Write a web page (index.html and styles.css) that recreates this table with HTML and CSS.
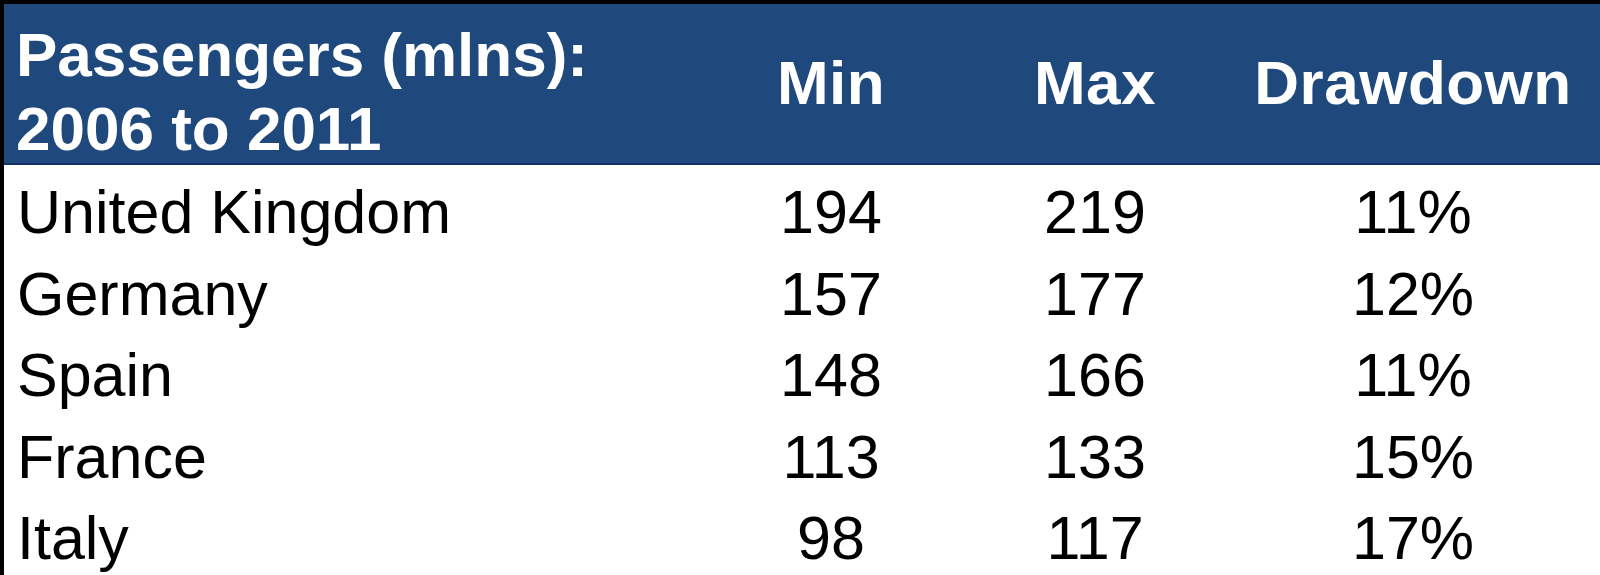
FILE: index.html
```html
<!DOCTYPE html>
<html>
<head>
<meta charset="utf-8">
<link rel="stylesheet" href="styles.css">
<title>Passengers</title>
</head>
<body>
<div class="frame">
  <div class="row head">
    <div class="cell name">Passengers (mlns):<br>2006 to 2011</div>
    <div class="cell num label">Min</div>
    <div class="cell num label">Max</div>
    <div class="cell num label">Drawdown</div>
  </div>
  <div class="body">
    <div class="row"><div class="cell name">United Kingdom</div><div class="cell num">194</div><div class="cell num">219</div><div class="cell num">11%</div></div>
    <div class="row"><div class="cell name">Germany</div><div class="cell num">157</div><div class="cell num">177</div><div class="cell num">12%</div></div>
    <div class="row"><div class="cell name">Spain</div><div class="cell num">148</div><div class="cell num">166</div><div class="cell num">11%</div></div>
    <div class="row"><div class="cell name">France</div><div class="cell num">113</div><div class="cell num">133</div><div class="cell num">15%</div></div>
    <div class="row"><div class="cell name">Italy</div><div class="cell num">98</div><div class="cell num">117</div><div class="cell num">17%</div></div>
  </div>
</div>
</body>
</html>
```

FILE: styles.css
```css
html, body {
  margin: 0;
  padding: 0;
  background: #ffffff;
  overflow: hidden;
}
body {
  width: 1600px;
  height: 575px;
  font-family: "Liberation Sans", Arial, sans-serif;
}
.frame {
  height: 575px;
  box-sizing: border-box;
  border-top: 4px solid #000000;
  border-left: 4px solid #000000;
  overflow: hidden;
}
.row {
  display: grid;
  grid-template-columns: 694px 266px 262px 374px;
}
.head {
  height: 159px;
  background: #1f497d;
  color: #ffffff;
  font-weight: bold;
  font-size: 62px;
  line-height: 74px;
  border-bottom: 2px solid #14306b;
}
.head .name {
  padding: 14px 0 0 12px;
  white-space: nowrap;
}
.head .label {
  align-self: center;
  padding-bottom: 4px;
  letter-spacing: 0.5px;
}
.body {
  padding-top: 7px;
  color: #000000;
  font-size: 61px;
  line-height: 81.6px;
}
.body .row {
  height: 81.6px;
}
.body .name {
  padding-left: 13px;
  white-space: nowrap;
}
.num {
  text-align: center;
}
```
